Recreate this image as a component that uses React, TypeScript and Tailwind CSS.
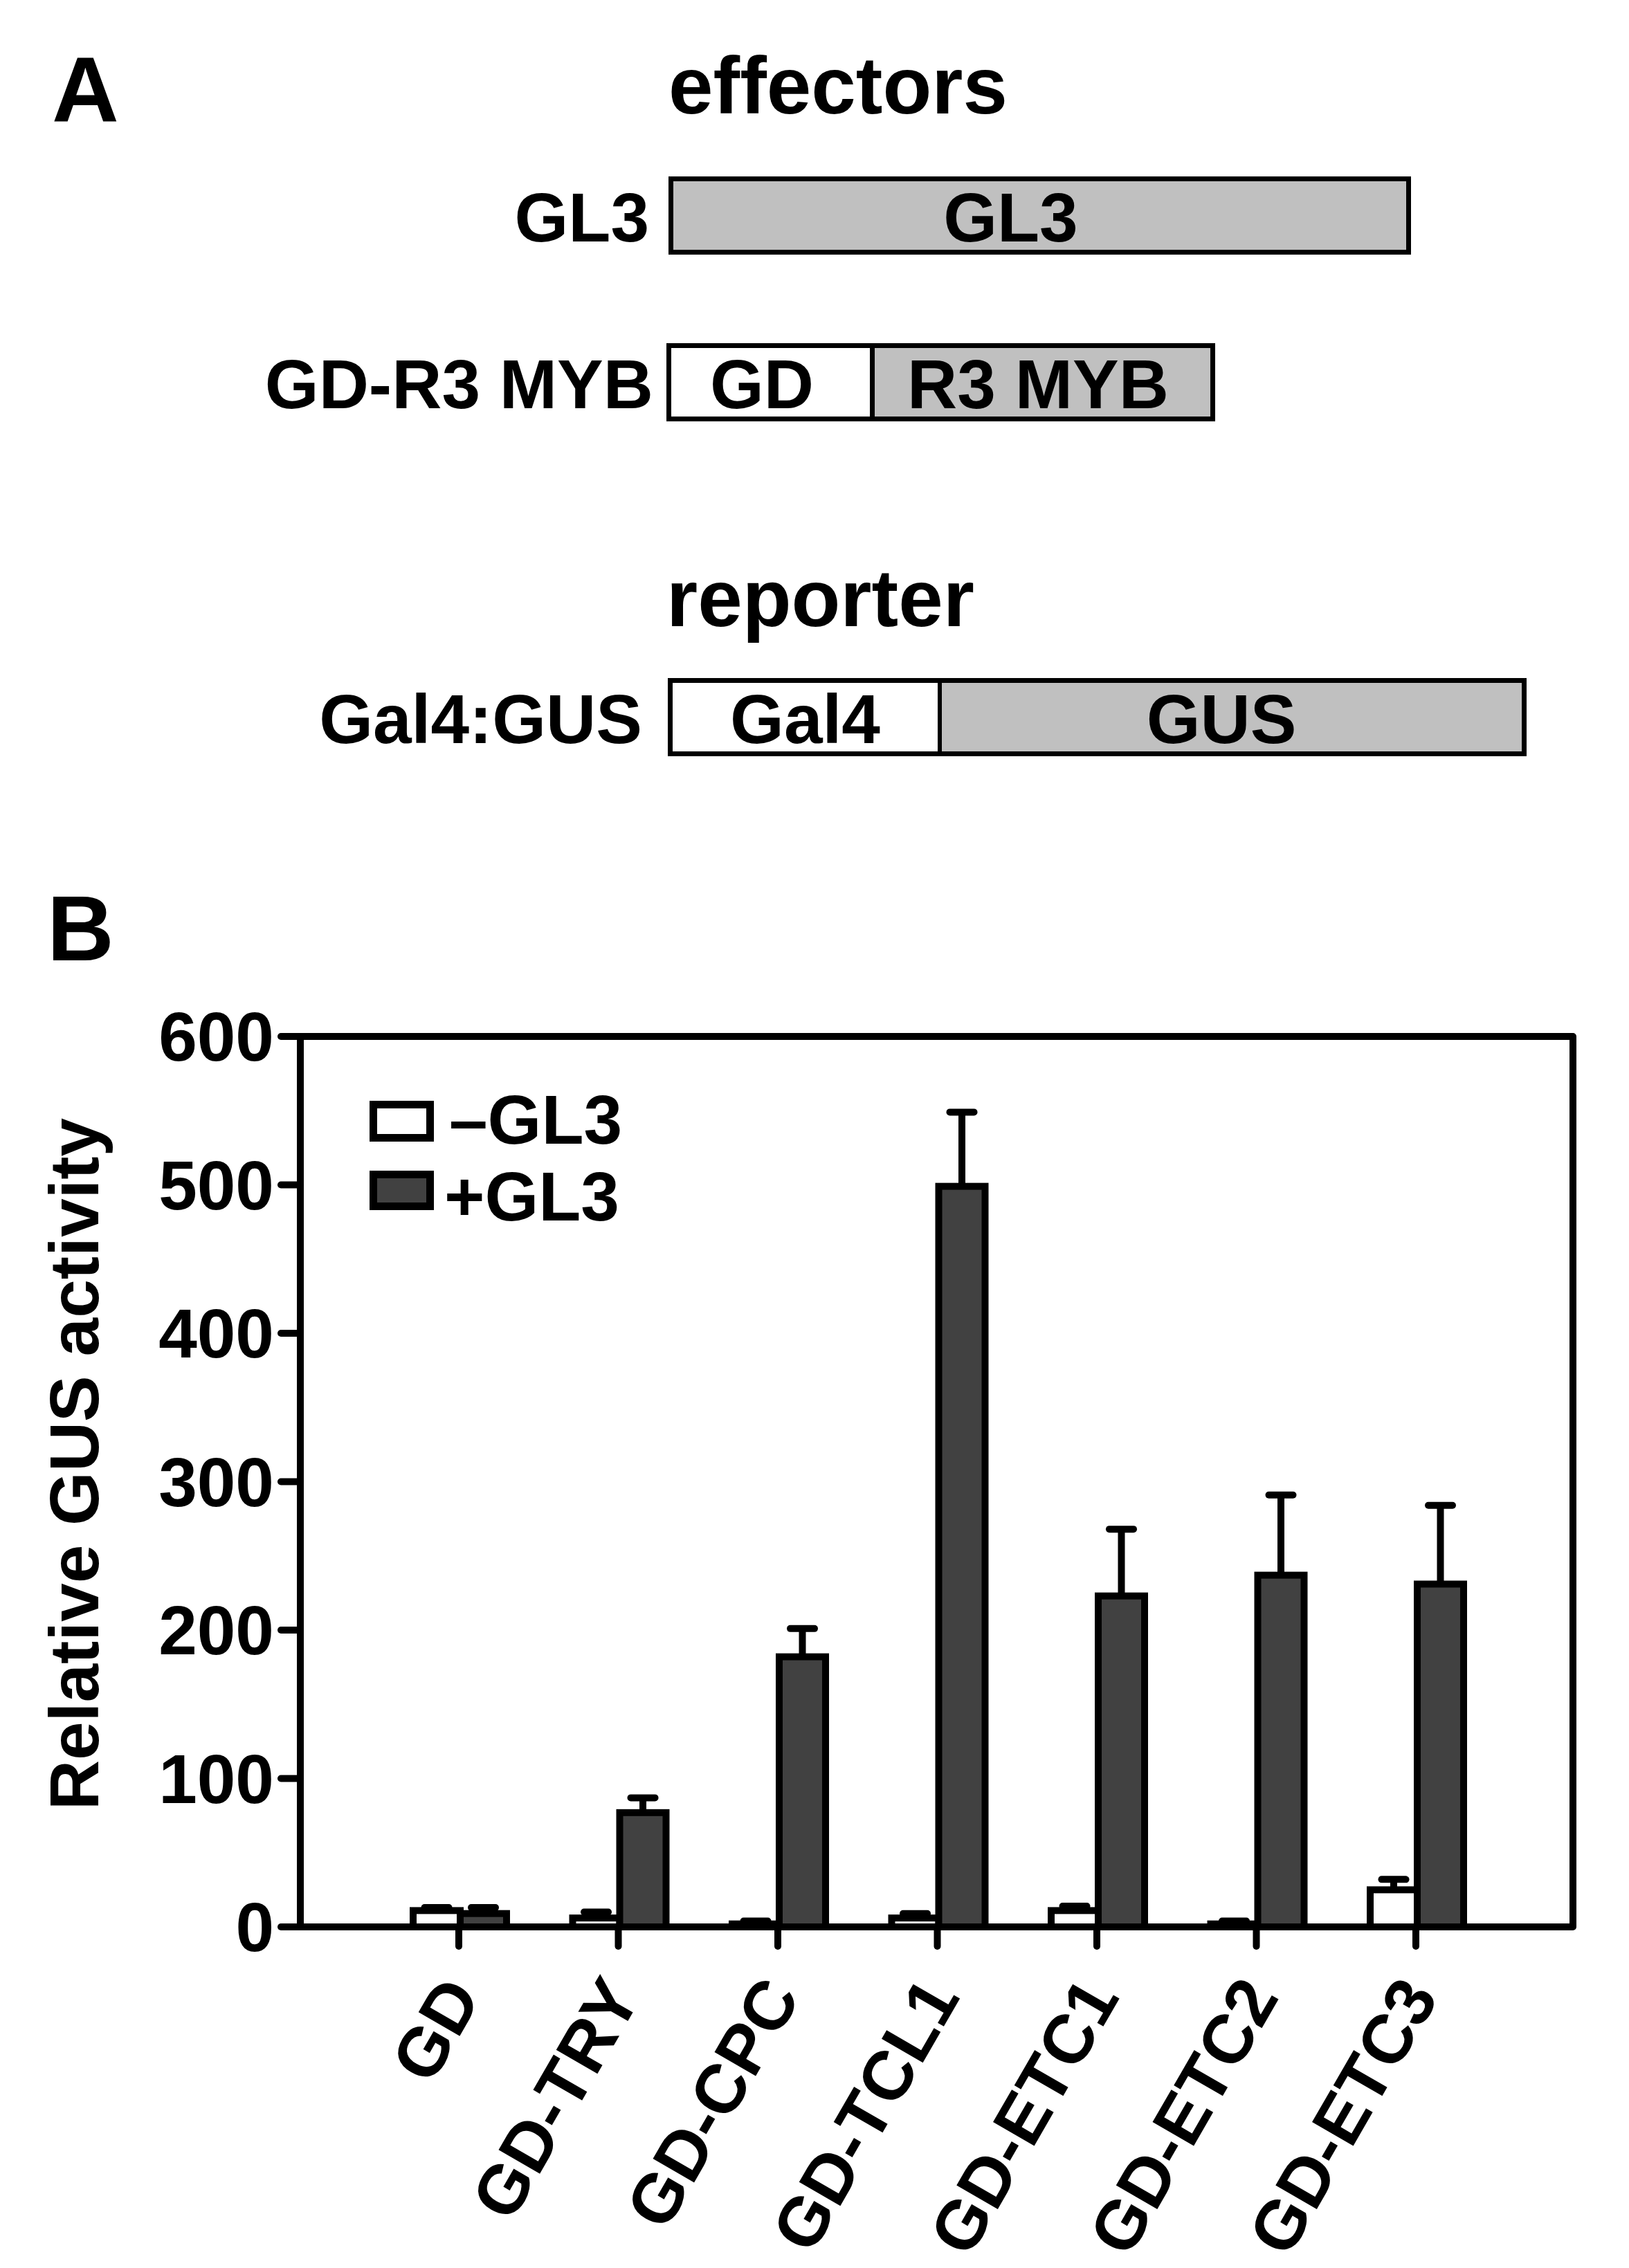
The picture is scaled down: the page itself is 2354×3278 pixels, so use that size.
import React from 'react';

type Group = {
  name: string;
  minus: [number, number];
  plus: [number, number];
};

// mean, mean + SD read off the published figure
const groups: Group[] = [
  { name: 'GD', minus: [11, 13], plus: [9, 13] },
  { name: 'GD-TRY', minus: [6, 10], plus: [77, 87] },
  { name: 'GD-CPC', minus: [2, 4], plus: [182, 201] },
  { name: 'GD-TCL1', minus: [6, 9], plus: [499, 549] },
  { name: 'GD-ETC1', minus: [11, 14], plus: [223, 268] },
  { name: 'GD-ETC2', minus: [2, 4], plus: [237, 291] },
  { name: 'GD-ETC3', minus: [25, 32], plus: [231, 284] },
];

const Y0 = 2785;
const PX_PER_UNIT = 2.145;
const yOf = (v: number) => Y0 - v * PX_PER_UNIT;
const tickX = (i: number) => 663 + i * 230.5;
const DARK = '#414141';

const Segment = ({ children, className = '' }: { children: React.ReactNode; className?: string }) => (
  <div className={`flex items-center justify-center whitespace-nowrap pt-[4px] text-[100px] leading-none ${className}`}>
    {children}
  </div>
);

const ErrorBar = ({ cx, value, err }: { cx: number; value: number; err: number }) => (
  <g stroke="black" strokeWidth={10} strokeLinecap="round">
    <line x1={cx} x2={cx} y1={yOf(value)} y2={yOf(err)} strokeLinecap="butt" />
    <line x1={cx - 17.5} x2={cx + 17.5} y1={yOf(err)} y2={yOf(err)} />
  </g>
);

const Chart = () => (
  <svg width={2354} height={1869} viewBox="0 1409 2354 1869" className="block">
    {/* y axis title */}
    <text transform="translate(142 2116) rotate(-90)" textAnchor="middle" fontSize={100}>
      Relative GUS activity
    </text>

    {/* y ticks */}
    {[0, 100, 200, 300, 400, 500, 600].map((v) => (
      <g key={v}>
        <line x1={406} x2={434} y1={yOf(v)} y2={yOf(v)} stroke="black" strokeWidth={10} strokeLinecap="round" />
        <text x={396} y={yOf(v) + 35} textAnchor="end" fontSize={100}>
          {v}
        </text>
      </g>
    ))}

    {/* bars */}
    {groups.map((g, i) => {
      const c = tickX(i);
      return (
        <g key={g.name}>
          <ErrorBar cx={c - 32} value={g.minus[0]} err={g.minus[1]} />
          <ErrorBar cx={c + 35.5} value={g.plus[0]} err={g.plus[1]} />
          <rect
            x={c - 66}
            y={yOf(g.minus[0])}
            width={68}
            height={Y0 - yOf(g.minus[0])}
            fill="white"
            stroke="black"
            strokeWidth={10}
          />
          <rect
            x={c + 2}
            y={yOf(g.plus[0])}
            width={67}
            height={Y0 - yOf(g.plus[0])}
            fill={DARK}
            stroke="black"
            strokeWidth={10}
          />
        </g>
      );
    })}

    {/* frame */}
    <rect
      x={434}
      y={1498}
      width={1839}
      height={Y0 - 1498}
      fill="none"
      stroke="black"
      strokeWidth={10}
      strokeLinejoin="round"
    />

    {/* x ticks + rotated labels */}
    {groups.map((g, i) => {
      const c = tickX(i);
      return (
        <g key={g.name}>
          <line x1={c} x2={c} y1={Y0} y2={2813} stroke="black" strokeWidth={10} strokeLinecap="round" />
          <text transform={`translate(${c + 3} 2868) rotate(-60)`} y={36} textAnchor="end" fontSize={100}>
            {g.name}
          </text>
        </g>
      );
    })}

    {/* legend */}
    <rect x={539.5} y={1596.5} width={82} height={48} fill="white" stroke="black" strokeWidth={11} />
    <text x={649} y={1653} fontSize={100}>
      {'\u2013GL3'}
    </text>
    <rect x={539.5} y={1697.5} width={82} height={46} fill={DARK} stroke="black" strokeWidth={11} />
    <text x={642} y={1764} fontSize={100}>
      +GL3
    </text>
  </svg>
);

export default function App() {
  return (
    <div className="w-[2354px] h-[3278px] overflow-hidden bg-white pt-[63px] font-['Liberation_Sans',Arial,sans-serif] font-bold text-black">
      {/* Panel A */}
      <div className="flex items-start pl-[75px]">
        <div className="w-[891px] text-[134px] leading-none">A</div>
        <div className="mt-[3px] text-[116px] leading-none">effectors</div>
      </div>

      <div className="mt-[58px] flex">
        <div className="flex h-[113px] w-[938px] items-center justify-end pt-[4px] text-[100px] leading-none">GL3</div>
        <div className="ml-[28px] flex h-[113px] w-[1073px] border-[7px] border-black bg-[#c0c0c0]">
          <Segment className="flex-1 pr-[84px]">GL3</Segment>
        </div>
      </div>

      <div className="mt-[128px] flex">
        <div className="flex h-[113px] w-[944px] items-center justify-end whitespace-nowrap pt-[4px] text-[100px] leading-none">
          GD-R3 MYB
        </div>
        <div className="ml-[19px] flex h-[113px] w-[793px] border-[7px] border-black">
          <Segment className="w-[287px] bg-white pr-[25px]">GD</Segment>
          <Segment className="flex-1 border-l-[7px] border-black bg-[#c0c0c0] pr-[13px]">R3 MYB</Segment>
        </div>
      </div>

      <div className="mt-[198px] pl-[963px] text-[116px] leading-none">reporter</div>

      <div className="mt-[57px] flex">
        <div className="flex h-[113px] w-[928px] items-center justify-end pt-[4px] text-[100px] leading-none">Gal4:GUS</div>
        <div className="ml-[37px] flex h-[113px] w-[1241px] border-[7px] border-black">
          <Segment className="w-[383px] bg-white">Gal4</Segment>
          <Segment className="flex-1 border-l-[6px] border-black bg-[#c0c0c0] pr-[30px]">GUS</Segment>
        </div>
      </div>

      {/* Panel B */}
      <div className="mt-[182px] h-[134px] pl-[68px] text-[134px] leading-none">B</div>
      <Chart />
    </div>
  );
}
